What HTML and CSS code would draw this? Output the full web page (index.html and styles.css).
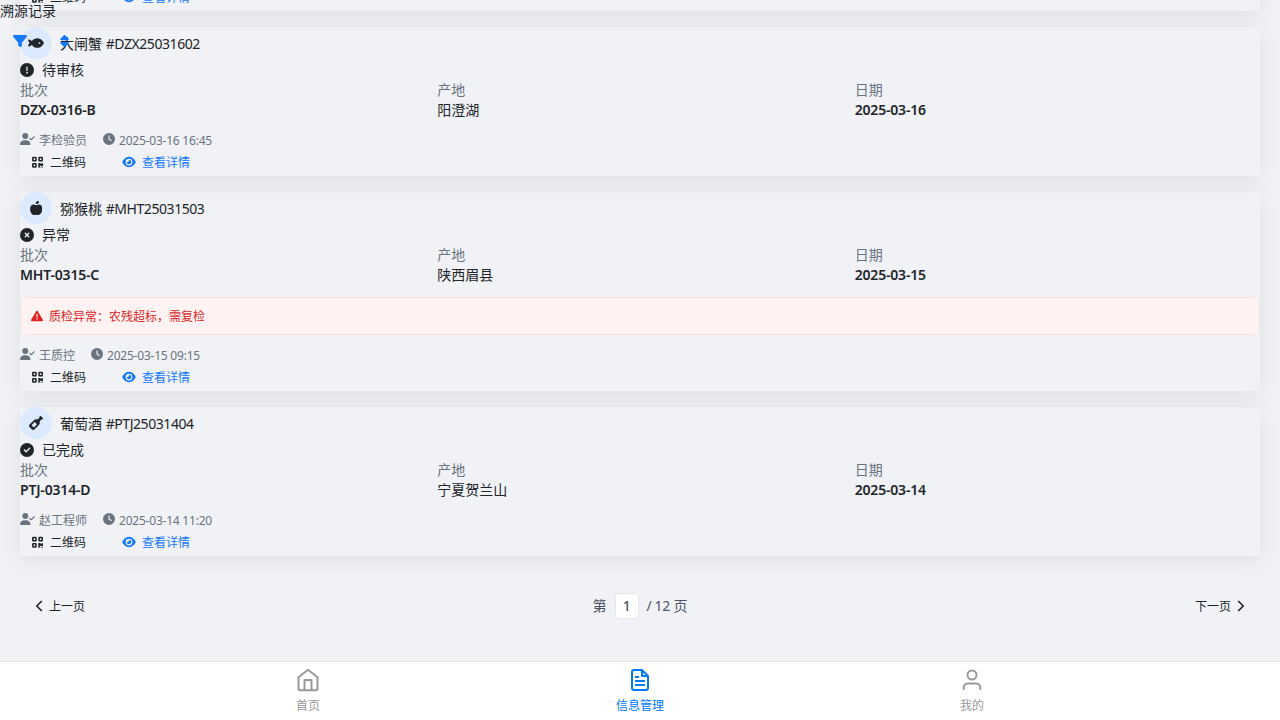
FILE: index.html
```
<!DOCTYPE html>
<html lang="zh-CN">
<head>
<meta charset="utf-8">
<title>溯源记录</title>
<link rel="stylesheet" href="styles.css">
</head>
<body>
<svg class="sprite" aria-hidden="true">
<symbol id="filter" viewBox="0 0 512 512"><path d="M3.9 54.9C10.5 40.9 24.5 32 40 32H472c15.5 0 29.5 8.9 36.1 22.9s4.6 30.5-5.2 42.5L320 320.9V448c0 12.1-6.8 23.2-17.7 28.6s-23.8 4.3-33.5-3l-64-48c-8.1-6-12.8-15.5-12.8-25.6V320.9L9 97.3C-.7 85.4-2.8 68.8 3.9 54.9z"/></symbol>
<symbol id="sort" viewBox="0 0 320 512"><path d="M137.4 41.4c12.5-12.5 32.8-12.5 45.3 0l128 128c9.2 9.2 11.9 22.9 6.9 34.9s-16.6 19.8-29.6 19.8H32c-12.9 0-24.6-7.8-29.6-19.8s-2.2-25.7 6.9-34.9l128-128zm0 429.3l-128-128c-9.2-9.2-11.9-22.9-6.9-34.9s16.6-19.8 29.6-19.8H288c12.9 0 24.6 7.8 29.6 19.8s2.2 25.7-6.9 34.9l-128 128c-12.5 12.5-32.8 12.5-45.3 0z"/></symbol>
<symbol id="fish" viewBox="0 0 576 512"><path d="M180.5 141.5C219.7 108.5 272.6 80 336 80s116.3 28.5 155.5 61.5c39.1 33 66.9 72.4 81 99.8c4.7 9.2 4.7 20.1 0 29.3c-14.1 27.4-41.9 66.8-81 99.8C452.3 403.5 399.4 432 336 432s-116.3-28.5-155.5-61.5c-16.2-13.7-30.5-28.5-42.7-43.1L48.1 379.6c-12.5 7.3-28.4 5.3-38.7-4.9S-3 348.7 4.2 336.1L50 256 4.2 175.9c-7.2-12.6-5-28.4 5.3-38.6s26.1-12.2 38.7-4.9l89.7 52.3c12.2-14.6 26.5-29.4 42.7-43.1zM448 256a32 32 0 1 0 -64 0 32 32 0 1 0 64 0z"/></symbol>
<symbol id="apple" viewBox="0 0 448 512"><path d="M224 112c-8.8 0-16-7.2-16-16V80c0-44.2 35.8-80 80-80h16c8.8 0 16 7.2 16 16V32c0 44.2-35.8 80-80 80H224zM0 288c0-76.3 35.7-160 112-160c27.3 0 59.7 10.3 82.7 19.3c18.8 7.3 39.9 7.3 58.7 0c22.9-8.9 55.4-19.3 82.7-19.3c76.3 0 112 83.7 112 160c0 128-80 224-160 224c-16.5 0-38.1-6.6-51.5-11.3c-8.1-2.8-16.9-2.8-25 0c-13.4 4.7-35 11.3-51.5 11.3C80 512 0 416 0 288z"/></symbol>
<symbol id="bottle" viewBox="0 0 512 512"><path d="M393.4 9.4c12.5-12.5 32.8-12.5 45.3 0l64 64c12.5 12.5 12.5 32.8 0 45.3c-11.8 11.8-30.7 12.5-43.2 1.9l-9.5 9.5-48.8 48.8c-9.2 9.2-11.5 22.9-8.6 35.6c9.4 40.9-1.9 85.6-33.8 117.5L197.3 493.3c-25 25-65.5 25-90.5 0l-88-88c-25-25-25-65.5 0-90.5L180.2 153.3c31.9-31.9 76.6-43.1 117.5-33.8c12.6 2.9 26.4 .5 35.5-8.6l48.8-48.8 9.5-9.5c-10.6-12.6-10-31.4 1.9-43.2zM99.3 347.3l65.4 65.4c6.2 6.2 16.4 6.2 22.6 0l97.4-97.4c6.2-6.2 6.2-16.4 0-22.6l-65.4-65.4c-6.2-6.2-16.4-6.2-22.6 0l-97.4 97.4c-6.2 6.2-6.2 16.4 0 22.6z"/></symbol>
<symbol id="exclaim" viewBox="0 0 512 512"><path d="M256 512A256 256 0 1 0 256 0a256 256 0 1 0 0 512zm0-384c13.3 0 24 10.7 24 24V264c0 13.3-10.7 24-24 24s-24-10.7-24-24V152c0-13.3 10.7-24 24-24zM224 352a32 32 0 1 1 64 0 32 32 0 1 1-64 0z"/></symbol>
<symbol id="xmark" viewBox="0 0 512 512"><path d="M256 512A256 256 0 1 0 256 0a256 256 0 1 0 0 512zM175 175c9.4-9.4 24.6-9.4 33.9 0l47 47 47-47c9.4-9.4 24.6-9.4 33.9 0s9.4 24.6 0 33.9l-47 47 47 47c9.4 9.4 9.4 24.6 0 33.9s-24.6 9.4-33.9 0l-47-47-47 47c-9.4 9.4-24.6 9.4-33.9 0s-9.4-24.6 0-33.9l47-47-47-47c-9.4-9.4-9.4-24.6 0-33.9z"/></symbol>
<symbol id="check" viewBox="0 0 512 512"><path d="M256 512A256 256 0 1 0 256 0a256 256 0 1 0 0 512zM369 209L241 337c-9.4 9.4-24.6 9.4-33.9 0l-64-64c-9.4-9.4-9.4-24.6 0-33.9s24.6-9.4 33.9 0l47 47L335 175c9.4-9.4 24.6-9.4 33.9 0s9.4 24.6 0 33.9z"/></symbol>
<symbol id="clock" viewBox="0 0 512 512"><path d="M256 0a256 256 0 1 1 0 512A256 256 0 1 1 256 0zM232 120V256c0 8 4 15.5 10.7 20l96 64c11 7.4 25.9 4.4 33.3-6.7s4.4-25.9-6.7-33.3L280 243.2V120c0-13.3-10.7-24-24-24s-24 10.7-24 24z"/></symbol>
<symbol id="usercheck" viewBox="0 0 640 512"><path d="M96 128a128 128 0 1 1 256 0A128 128 0 1 1 96 128zM0 482.3C0 383.8 79.8 304 178.3 304h91.4C368.2 304 448 383.8 448 482.3c0 16.4-13.3 29.7-29.7 29.7H29.7C13.3 512 0 498.7 0 482.3zM625 177L497 305c-9.4 9.4-24.6 9.4-33.9 0l-64-64c-9.4-9.4-9.4-24.6 0-33.9s24.6-9.4 33.9 0l47 47L591 143c9.4-9.4 24.6-9.4 33.9 0s9.4 24.6 0 33.9z"/></symbol>
<symbol id="eye" viewBox="0 0 576 512"><path d="M288 32c-80.8 0-145.5 36.8-192.6 80.6C48.6 156 17.3 208 2.5 243.7c-3.3 7.9-3.3 16.7 0 24.6C17.3 304 48.6 356 95.4 399.4C142.5 443.2 207.2 480 288 480s145.5-36.8 192.6-80.6c46.8-43.5 78.1-95.4 93-131.1c3.3-7.9 3.3-16.7 0-24.6c-14.9-35.7-46.2-87.7-93-131.1C433.5 68.8 368.8 32 288 32zM144 256a144 144 0 1 1 288 0 144 144 0 1 1-288 0zm144-64c0 35.3-28.7 64-64 64c-7.1 0-13.9-1.2-20.3-3.3c-5.5-1.8-11.9 1.6-11.7 7.4c.3 6.9 1.3 13.8 3.2 20.7c13.7 51.2 66.4 81.6 117.6 67.9s81.6-66.4 67.9-117.6c-11.1-41.5-47.8-69.4-88.6-71.1c-5.8-.2-9.2 6.1-7.4 11.7c2.1 6.4 3.3 13.2 3.3 20.3z"/></symbol>
<symbol id="qr" viewBox="0 0 448 512"><path fill-rule="evenodd" d="M48 32h96a48 48 0 0 1 48 48v96a48 48 0 0 1-48 48H48a48 48 0 0 1-48-48V80a48 48 0 0 1 48-48zM64 96v64h64V96zM304 32h96a48 48 0 0 1 48 48v96a48 48 0 0 1-48 48h-96a48 48 0 0 1-48-48V80a48 48 0 0 1 48-48zM320 96v64h64V96zM48 288h96a48 48 0 0 1 48 48v96a48 48 0 0 1-48 48H48a48 48 0 0 1-48-48v-96a48 48 0 0 1 48-48zM64 352v64h64v-64zM272 288h64q16 0 16 16t16 16h16q16 0 16-16t16-16h16q16 0 16 16v96q0 16-16 16h-64q-16 0-16-16t-16-16-16 16v64q0 16-16 16h-32q-16 0-16-16V304q0-16 16-16zM352 448h32v32h-32zM416 448h32v32h-32z"/></symbol>
<symbol id="warn" viewBox="0 0 512 512"><path d="M256 32c14.2 0 27.3 7.5 34.5 19.8l216 368c7.3 12.4 7.3 27.7 .2 40.1S486.3 480 472 480H40c-14.3 0-27.6-7.7-34.7-20.1s-7-27.8 .2-40.1l216-368C228.7 39.5 241.8 32 256 32zm0 128c-13.3 0-24 10.7-24 24V296c0 13.3 10.7 24 24 24s24-10.7 24-24V184c0-13.3-10.7-24-24-24zm32 224a32 32 0 1 0-64 0 32 32 0 1 0 64 0z"/></symbol>
</svg>

<main class="page">
  <section class="list">
    <article class="card card-cut">
      <div class="actions"><span class="btn"><svg class="i-qr"><use href="#qr"/></svg><span class="txt">二维码</span></span><span class="btn link"><svg class="i-eye"><use href="#eye"/></svg><span class="txt">查看详情</span></span></div>
    </article>

    <article class="card">
      <div class="head"><span class="avatar"><svg class="i-fish"><use href="#fish"/></svg></span><span class="name">大闸蟹 <span class="lat">#DZX25031602</span></span></div>
      <div class="status"><svg class="i14"><use href="#exclaim"/></svg>待审核</div>
      <div class="grid">
        <div><div class="label">批次</div><div class="value lat">DZX-0316-B</div></div>
        <div><div class="label">产地</div><div class="value">阳澄湖</div></div>
        <div><div class="label">日期</div><div class="value lat">2025-03-16</div></div>
      </div>
      <div class="meta"><span><svg class="i-user"><use href="#usercheck"/></svg>李检验员</span><span><svg class="i12"><use href="#clock"/></svg><span class="lat">2025-03-16 16:45</span></span></div>
      <div class="actions"><span class="btn"><svg class="i-qr"><use href="#qr"/></svg><span class="txt">二维码</span></span><span class="btn link"><svg class="i-eye"><use href="#eye"/></svg><span class="txt">查看详情</span></span></div>
    </article>

    <article class="card">
      <div class="head"><span class="avatar"><svg class="i-apple"><use href="#apple"/></svg></span><span class="name">猕猴桃 <span class="lat">#MHT25031503</span></span></div>
      <div class="status"><svg class="i14"><use href="#xmark"/></svg>异常</div>
      <div class="grid">
        <div><div class="label">批次</div><div class="value lat">MHT-0315-C</div></div>
        <div><div class="label">产地</div><div class="value">陕西眉县</div></div>
        <div><div class="label">日期</div><div class="value lat">2025-03-15</div></div>
      </div>
      <div class="alert"><svg class="i12"><use href="#warn"/></svg><span class="txt">质检异常：农残超标，需复检</span></div>
      <div class="meta"><span><svg class="i-user"><use href="#usercheck"/></svg>王质控</span><span><svg class="i12"><use href="#clock"/></svg><span class="lat">2025-03-15 09:15</span></span></div>
      <div class="actions"><span class="btn"><svg class="i-qr"><use href="#qr"/></svg><span class="txt">二维码</span></span><span class="btn link"><svg class="i-eye"><use href="#eye"/></svg><span class="txt">查看详情</span></span></div>
    </article>

    <article class="card">
      <div class="head"><span class="avatar"><svg class="i14"><use href="#bottle"/></svg></span><span class="name">葡萄酒 <span class="lat">#PTJ25031404</span></span></div>
      <div class="status"><svg class="i14"><use href="#check"/></svg>已完成</div>
      <div class="grid">
        <div><div class="label">批次</div><div class="value lat">PTJ-0314-D</div></div>
        <div><div class="label">产地</div><div class="value">宁夏贺兰山</div></div>
        <div><div class="label">日期</div><div class="value lat">2025-03-14</div></div>
      </div>
      <div class="meta"><span><svg class="i-user"><use href="#usercheck"/></svg>赵工程师</span><span><svg class="i12"><use href="#clock"/></svg><span class="lat">2025-03-14 11:20</span></span></div>
      <div class="actions"><span class="btn"><svg class="i-qr"><use href="#qr"/></svg><span class="txt">二维码</span></span><span class="btn link"><svg class="i-eye"><use href="#eye"/></svg><span class="txt">查看详情</span></span></div>
    </article>
  </section>

  <div class="pager">
    <span class="turn"><svg class="chev" viewBox="0 0 8 12"><path d="M6.300 1.500 1.800 6l4.500 4.500"/></svg><span class="txt">上一页</span></span>
    <span class="pages"><span>第</span><span class="current lat">1</span><span><span class="lat">/ 12</span> 页</span></span>
    <span class="turn"><span class="txt">下一页</span><svg class="chev" viewBox="0 0 8 12"><path d="M1.700 1.500l4.500 4.500-4.500 4.500"/></svg></span>
  </div>
</main>

<header class="topbar">
  <div class="title">溯源记录</div>
  <div class="tools"><svg class="i14"><use href="#filter"/></svg><svg class="i-sort"><use href="#sort"/></svg></div>
</header>

<nav class="tabs">
  <span class="tab"><svg viewBox="0 0 24 24"><path d="M2.500 9.200 12 1.800l9.500 7.400V20.500a1.800 1.800 0 0 1-1.800 1.800H4.300a1.800 1.800 0 0 1-1.800-1.800zM8.500 22V12h7v10"/></svg>首页</span>
  <span class="tab active"><svg viewBox="0 0 24 24"><path d="M14 2H6a2 2 0 0 0-2 2v16a2 2 0 0 0 2 2h12a2 2 0 0 0 2-2V8zM14 2v6h6M17 13H7M17 17H7M11 9H7"/></svg>信息管理</span>
  <span class="tab"><svg viewBox="0 0 24 24"><path d="M20.3 22v-2.5a4 4 0 0 0-4-4H7.700a4 4 0 0 0-4 4V22"/><circle cx="12" cy="7" r="4.500"/></svg>我的</span>
</nav>
</body>
</html>
```
FILE: styles.css
```
* { box-sizing: border-box; }
body {
  margin: 0;
  height: 720px;
  overflow: hidden;
  display: flex;
  flex-direction: column;
  background: #f0f2f5;
  color: #212529;
  font: 14px/20px "Noto Sans", "Noto Sans CJK SC", sans-serif;
}
.sprite { position: absolute; width: 0; height: 0; }
svg { fill: currentColor; flex: none; display: block; }
.lat { letter-spacing: -0.43px; }
.page { height: 661px; overflow: hidden; background: #f0f2f5; }
.list { display: flex; flex-direction: column; gap: 16px; padding: 0 20px; margin-top: -138px; }
.card {
  box-shadow: 0 4px 20px rgba(0,0,0,.08);
}
.card-cut { height: 149px; display: flex; flex-direction: column; justify-content: flex-end; }
.head { display: flex; align-items: center; gap: 8px; height: 32px; white-space: pre; }
.name { padding-top: 2px; }
.txt { padding-top: 2px; }
.avatar { width: 32px; height: 32px; border-radius: 50%; background: #dbeafe; display: flex; align-items: center; justify-content: center; }
.status { display: flex; align-items: center; gap: 8px; height: 21px; padding-top: 1px; }
.grid { display: grid; grid-template-columns: repeat(3, 1fr); column-gap: 12px; height: 40px; }
.label { color: #6b7280; height: 20px; }
.value { height: 20px; }
.value.lat { font-weight: 600; letter-spacing: -.18px; }
.alert {
  display: flex; align-items: center; gap: 6px;
  height: 38px; margin-top: 12px; padding: 0 10px;
  border: 1px solid #fee2e2; border-radius: 8px;
  background: #fef2f2; color: #dc2626; font-size: 12px;
}
.meta { display: flex; gap: 16px; height: 16px; margin-top: 12px; color: #6b7280; font-size: 12px; line-height: 18px; }
.meta > span { display: flex; gap: 4px; }
.meta .lat { letter-spacing: -.22px; }
.meta svg { margin-top: 1px; }
.actions { display: flex; gap: 16px; height: 28px; font-size: 12px; }
.btn { display: flex; align-items: center; padding: 0 8px 0 12px; gap: 7px; }
.link { color: #1677ff; gap: 6px; }
.i14 { width: 14px; height: 14px; }
.i12 { width: 12px; height: 12px; }
.i-fish { width: 16px; height: 14px; }
.i-apple { width: 12.5px; height: 14px; }
.i-qr { width: 11px; height: 12.500px; }
.i-eye { width: 14px; height: 12px; }
.i-user { width: 15px; height: 12px; }
.i-sort { width: 9px; height: 14px; }
.pager { display: flex; justify-content: space-between; align-items: center; height: 28px; margin: 36px 35px 0; }
.turn { display: flex; align-items: center; gap: 6px; font-size: 12px; width: 90px; }
.turn:last-child { justify-content: flex-end; }
.chev { width: 8px; height: 12px; fill: none; stroke: currentColor; stroke-width: 1.7; stroke-linecap: round; stroke-linejoin: round; }
.pages { display: flex; align-items: center; gap: 8px; color: #4b5563; }
.current { width: 24px; height: 26px; line-height: 24px; text-align: center; border: 1px solid #e5e7eb; border-radius: 4px; background: #fff; font-weight: 500; }
/* The toolbar floats over the scrolled list. */
.topbar { position: absolute; top: 0; left: 0; line-height: 22px; }
.tools { display: flex; gap: 32.500px; padding: 12px 0 0 13px; color: #1677ff; }
.tabs { display: flex; justify-content: center; height: 59px; padding: 6px 142px 0; background: #fff; border-top: 1px solid #ebebeb; }
.tab { width: 332px; display: flex; flex-direction: column; align-items: center; gap: 5px; font-size: 12px; line-height: 18px; color: #999; }
.tab svg { width: 24px; height: 24px; fill: none; stroke: currentColor; stroke-width: 2; stroke-linejoin: round; }
.active { color: #007aff; }
```
